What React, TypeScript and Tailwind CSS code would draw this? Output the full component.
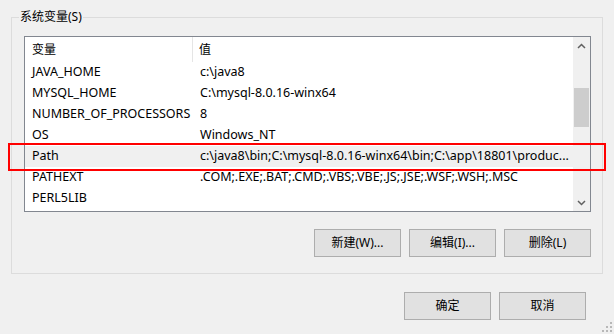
const rows = [
  { name: 'JAVA_HOME', value: 'c:\\java8' },
  { name: 'MYSQL_HOME', value: 'C:\\mysql-8.0.16-winx64' },
  { name: 'NUMBER_OF_PROCESSORS', value: '8' },
  { name: 'OS', value: 'Windows_NT' },
  { name: 'Path', value: 'c:\\java8\\bin;C:\\mysql-8.0.16-winx64\\bin;C:\\app\\18801\\produc...', selected: true },
  { name: 'PATHEXT', value: '.COM;.EXE;.BAT;.CMD;.VBS;.VBE;.JS;.JSE;.WSF;.WSH;.MSC' },
  { name: 'PERL5LIB', value: '' },
]

function WinButton({ label }: { label: string }) {
  return (
    <button className="w-[87px] h-[28px] bg-[#e1e1e1] border border-[#adadad] text-[12px] text-black flex items-center justify-center">
      {label}
    </button>
  )
}

export default function App() {
  return (
    <div
      className="relative w-[614px] h-[334px] bg-[#f0f0f0] text-black text-[12px] overflow-hidden"
      style={{ fontFamily: '"Noto Sans", "Noto Sans CJK SC", sans-serif' }}
    >
      {/* System variables group */}
      <div className="relative ml-[11px] mt-[17px] w-[592px] h-[257px] border border-[#dcdcdc] pt-[18px] pl-[12px]">
        <span className="absolute -top-[10px] left-[7px] px-[1px] bg-[#f0f0f0] leading-[18px]">系统变量(S)</span>

        {/* List view */}
        <div className="w-[567px] h-[176px] border border-[#828790] bg-white flex">
          <div className="flex-1 flex flex-col">
            <div className="h-[25px] flex items-center">
              <div className="w-[168px] h-full pl-[7px] flex items-center border-r border-[#e5e5e5]">变量</div>
              <div className="pl-[6px]">值</div>
            </div>
            {rows.map((r) => (
              <div
                key={r.name}
                className={`h-[21px] flex items-center text-[12.5px] ${r.selected ? 'bg-[#f0f0f0]' : ''}`}
              >
                <div className="w-[168px] pl-[7px] whitespace-nowrap overflow-hidden">{r.name}</div>
                <div className="flex-1 pl-[7px] whitespace-nowrap overflow-hidden">{r.value}</div>
              </div>
            ))}
          </div>

          {/* Scrollbar */}
          <div className="w-[17px] bg-[#f0f0f0] flex flex-col items-center">
            <div className="h-[17px] w-full flex items-center justify-center">
              <svg width="9" height="6" viewBox="0 0 9 6">
                <path d="M1 5 L4.5 1.5 L8 5" fill="none" stroke="#606060" strokeWidth="1.5" />
              </svg>
            </div>
            <div className="h-[34px]" />
            <div className="w-[15px] h-[39px] bg-[#cdcdcd]" />
            <div className="flex-1" />
            <div className="h-[17px] w-full flex items-center justify-center">
              <svg width="9" height="6" viewBox="0 0 9 6">
                <path d="M1 1 L4.5 4.5 L8 1" fill="none" stroke="#606060" strokeWidth="1.5" />
              </svg>
            </div>
          </div>
        </div>

        <div className="w-[567px] flex justify-end gap-[8px] mt-[17px]">
          <WinButton label="新建(W)..." />
          <WinButton label="编辑(I)..." />
          <WinButton label="删除(L)" />
        </div>
      </div>

      {/* Dialog buttons */}
      <div className="w-[586px] flex justify-end gap-[8px] mt-[18px]">
        <WinButton label="确定" />
        <WinButton label="取消" />
      </div>

      {/* Highlight rectangle over the Path row */}
      <div className="absolute left-[8px] top-[143px] w-[598px] h-[28px] border-2 border-[#ff0000]" />

      {/* Resize grip */}
      <svg className="absolute right-[1px] bottom-[1px]" width="11" height="11" viewBox="0 0 11 11">
        <rect x="8" y="0" width="2" height="2" fill="#b8b8b8" />
        <rect x="4" y="4" width="2" height="2" fill="#b8b8b8" />
        <rect x="8" y="4" width="2" height="2" fill="#b8b8b8" />
        <rect x="0" y="8" width="2" height="2" fill="#b8b8b8" />
        <rect x="4" y="8" width="2" height="2" fill="#b8b8b8" />
        <rect x="8" y="8" width="2" height="2" fill="#b8b8b8" />
      </svg>
    </div>
  )
}
